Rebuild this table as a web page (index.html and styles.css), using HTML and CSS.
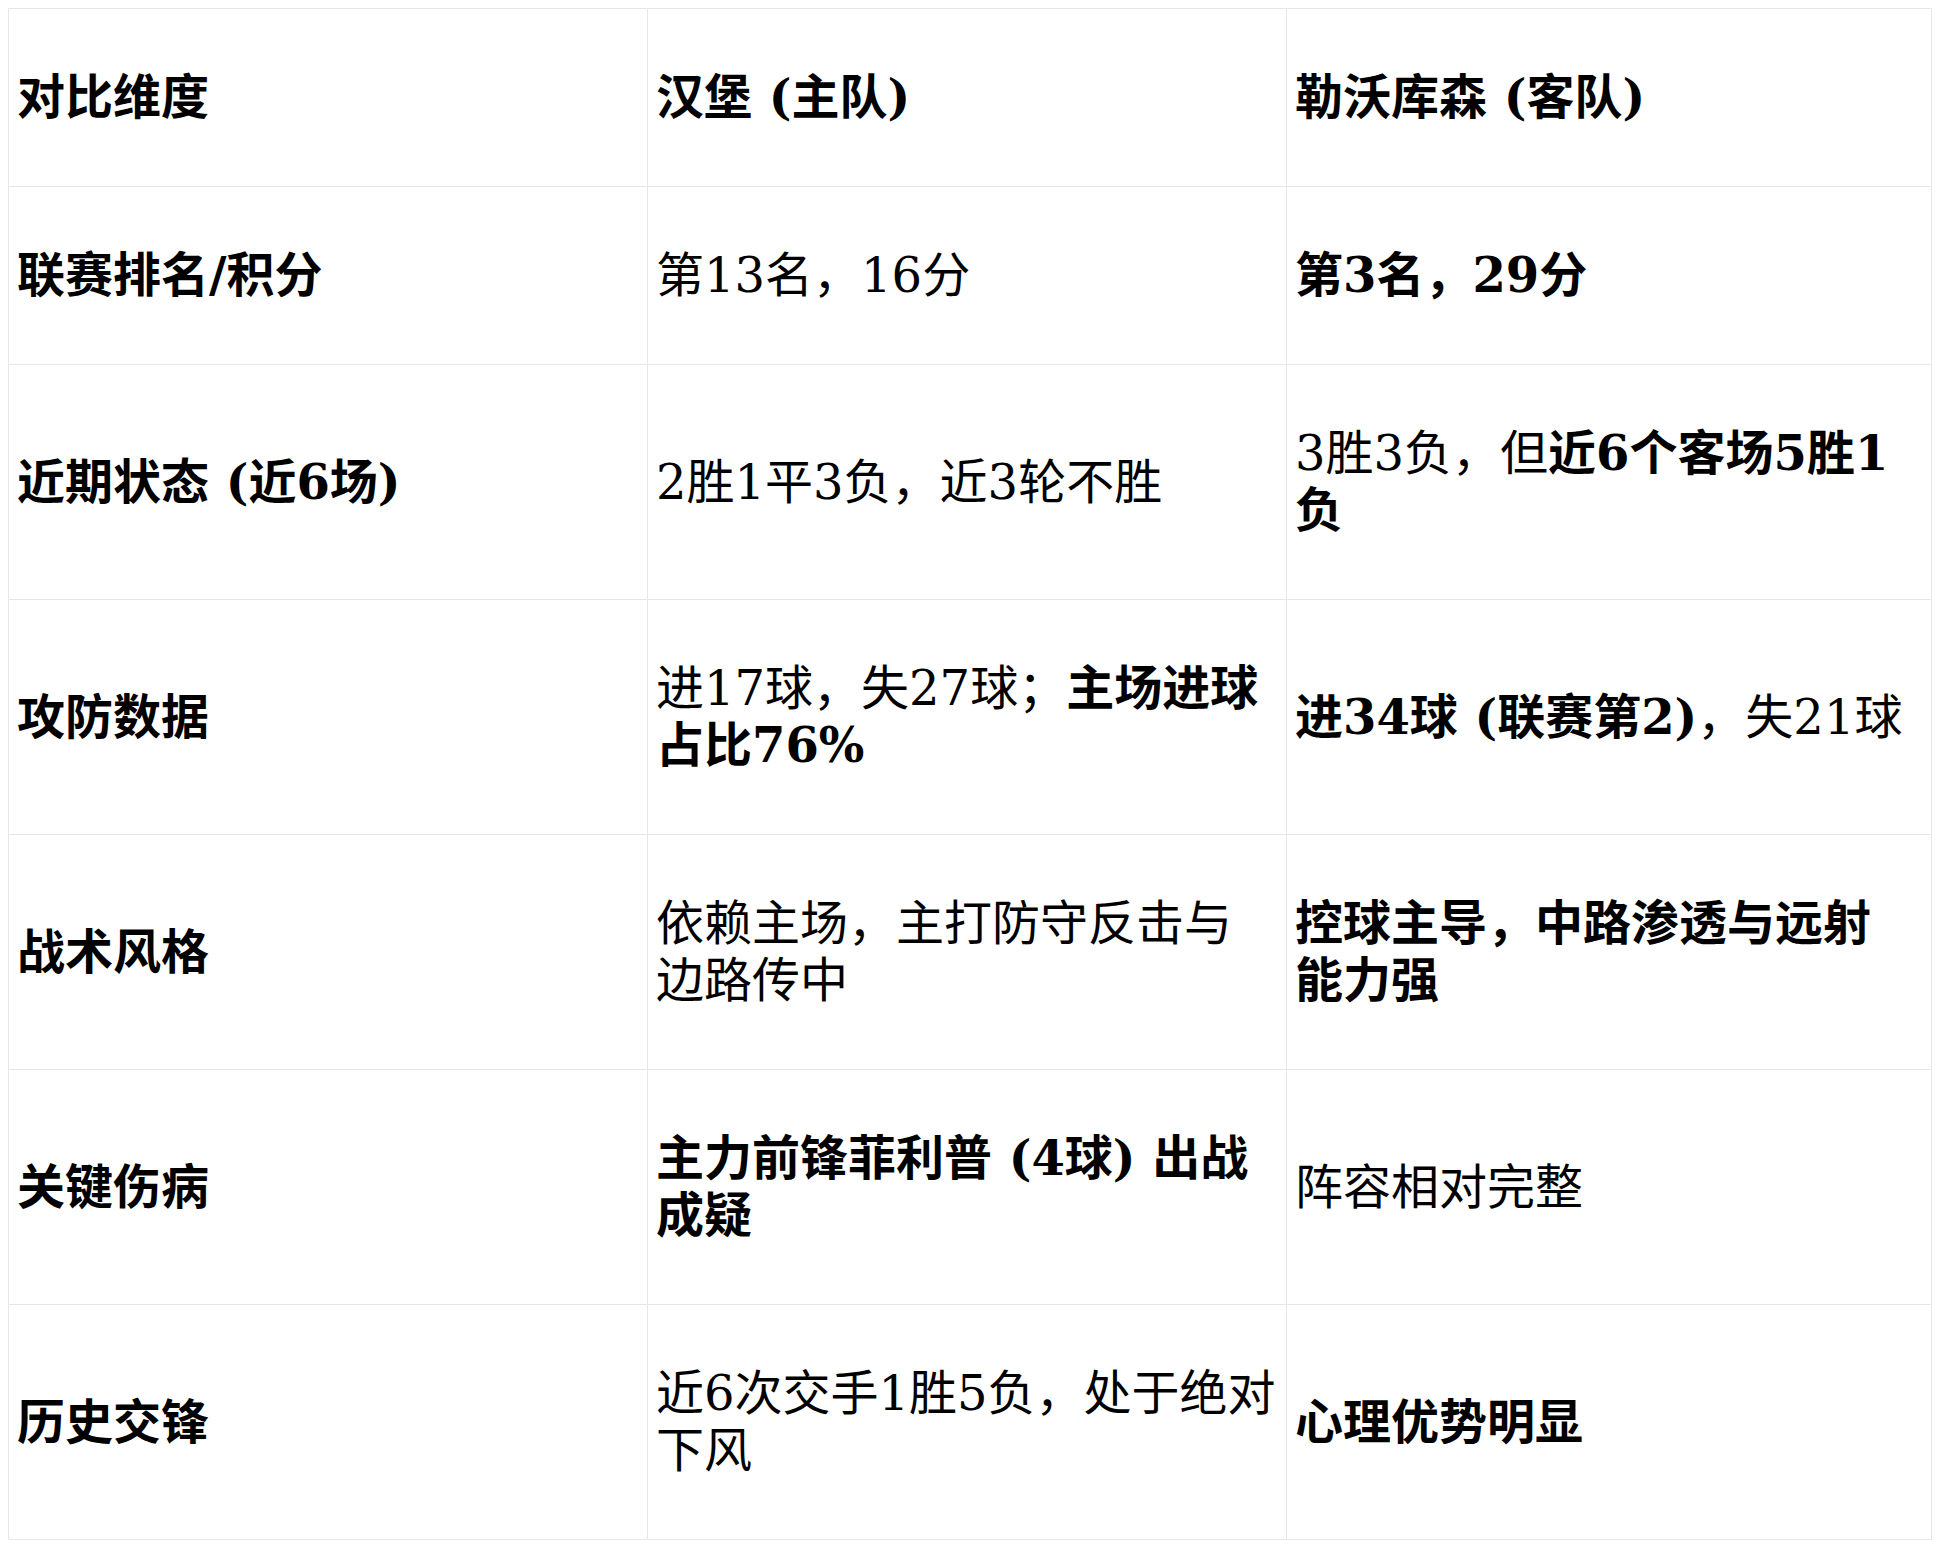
FILE: index.html
```html
<!DOCTYPE html>
<html lang="zh-CN">
<head>
<meta charset="utf-8">
<title>汉堡 vs 勒沃库森</title>
<link rel="stylesheet" href="styles.css">
</head>
<body>
<table class="compare">
  <colgroup>
    <col class="col-dim">
    <col class="col-home">
    <col class="col-away">
  </colgroup>
  <thead>
    <tr>
      <th>对比维度</th>
      <th>汉堡 (主队)</th>
      <th>勒沃库森 (客队)</th>
    </tr>
  </thead>
  <tbody>
    <tr>
      <th>联赛排名/积分</th>
      <td>第13名，16分</td>
      <td><strong>第3名，29分</strong></td>
    </tr>
    <tr>
      <th>近期状态 (近6场)</th>
      <td>2胜1平3负，近3轮不胜</td>
      <td>3胜3负，但<strong>近6个客场5胜1负</strong></td>
    </tr>
    <tr>
      <th>攻防数据</th>
      <td>进17球，失27球；<strong>主场进球占比76%</strong></td>
      <td><strong>进34球 (联赛第2)</strong>，失21球</td>
    </tr>
    <tr>
      <th>战术风格</th>
      <td>依赖主场，主打防守反击与边路传中</td>
      <td><strong>控球主导，中路渗透与远射能力强</strong></td>
    </tr>
    <tr>
      <th>关键伤病</th>
      <td><strong>主力前锋菲利普 (4球) 出战成疑</strong></td>
      <td>阵容相对完整</td>
    </tr>
    <tr>
      <th>历史交锋</th>
      <td>近6次交手1胜5负，处于绝对下风</td>
      <td><strong>心理优势明显</strong></td>
    </tr>
  </tbody>
</table>
</body>
</html>
```

FILE: styles.css
```css
html, body {
  background: #ffffff;
}
body {
  margin: 8px;
  font-family: "DejaVu Serif", "Noto Sans CJK SC", serif;
  color: #000000;
}
.compare {
  width: 100%;
  border-collapse: collapse;
  table-layout: fixed;
  font-size: 48px;
  line-height: 57px;
}
.col-dim,
.col-home {
  width: 639px;
}
.compare th,
.compare td {
  padding: 60px 8px;
  border: 1px solid #e5e7eb;
  text-align: left;
  vertical-align: middle;
  font-weight: normal;
}
.compare th:last-child,
.compare td:last-child {
  padding-right: 16px;
}
.compare th {
  font-weight: bold;
}
.compare strong {
  font-weight: bold;
}
```
